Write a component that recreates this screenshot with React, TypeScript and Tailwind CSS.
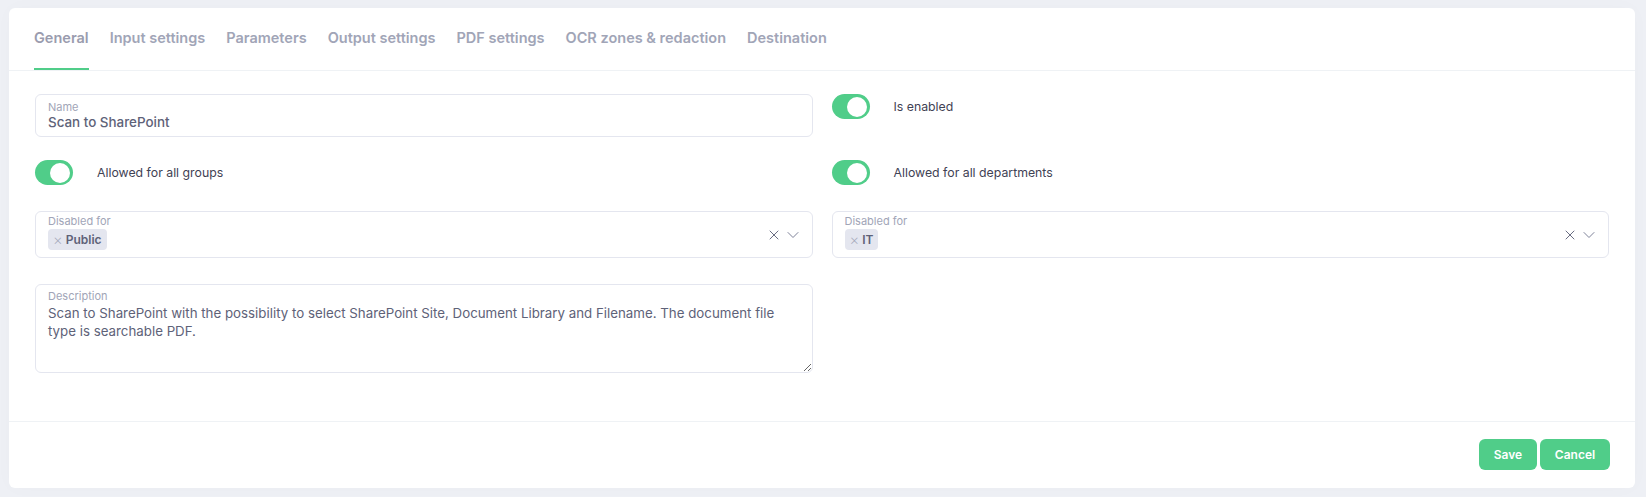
import { X, ChevronDown } from "lucide-react";

const tabs = [
  "General",
  "Input settings",
  "Parameters",
  "Output settings",
  "PDF settings",
  "OCR zones & redaction",
  "Destination",
];

function Toggle({ label }: { label: string }) {
  return (
    <div className="flex items-center">
      <div className="flex h-[25px] w-[38px] shrink-0 items-center justify-end rounded-full bg-[#50cd89] pr-[3px]">
        <div className="h-[20px] w-[20px] rounded-full bg-white" />
      </div>
      <span className="ml-[24px] text-[12.3px] leading-[18px] text-[#3f4254]">{label}</span>
    </div>
  );
}

function TagSelect({ tag }: { tag: string }) {
  return (
    <div className="flex h-[47px] items-start rounded-md border border-[#e4e6ef] bg-white pl-[12px] pr-[9px]">
      <div className="flex flex-1 flex-col pt-[3px]">
        <span className="text-[11px] leading-[13px] text-[#a1a5b7]">Disabled for</span>
        <div className="mt-[1px] flex">
          <span className="flex h-[21px] items-center gap-[3px] rounded-[4px] bg-[#e4e6ef] px-[5px] text-[12px] font-semibold text-[#5e6278]">
            <span className="text-[15px] font-extralight leading-none text-[#a1a5b7]">×</span>
            {tag}
          </span>
        </div>
      </div>
      <div className="flex h-full items-center gap-[1px]">
        <X size={16} strokeWidth={1.4} className="text-[#5e6278]" />
        <ChevronDown size={20} strokeWidth={1.2} className="text-[#7e8299]" />
      </div>
    </div>
  );
}

export default function App() {
  return (
    <div
      className="min-h-screen bg-[#eef0f5] pb-[9px] pl-[9px] pr-[11px] pt-[8px]"
      style={{ fontFamily: "Inter, 'Open Sans', sans-serif" }}
    >
      <div className="rounded-md bg-white shadow-[0_0_20px_rgba(76,87,125,0.02)]">
        {/* Tabs */}
        <div className="flex h-[63px] items-stretch gap-[21px] border-b border-[#eff2f5] px-[25px]">
          {tabs.map((t, i) => (
            <div
              key={t}
              className={
                "flex items-center border-b-2 pb-[1px] text-[14.5px] font-semibold " +
                (i === 0 ? "border-[#50cd89] text-[#9a9cae]" : "border-transparent text-[#a1a5b7]")
              }
            >
              {t}
            </div>
          ))}
        </div>

        {/* Body */}
        <div className="px-[26px] pb-[48px] pt-[23px]">
          <div className="grid grid-cols-2 items-start gap-x-[19px]">
            <div className="flex h-[43px] flex-col rounded-md border border-[#e4e6ef] px-[12px] pt-[6px]">
              <span className="text-[11px] leading-[13px] text-[#a1a5b7]">Name</span>
              <span className="text-[13.4px] font-medium leading-[17px] text-[#5e6278]">Scan to SharePoint</span>
            </div>
            <Toggle label="Is enabled" />
          </div>

          <div className="mt-[23px] grid grid-cols-2 gap-x-[19px]">
            <Toggle label="Allowed for all groups" />
            <Toggle label="Allowed for all departments" />
          </div>

          <div className="mt-[26px] grid grid-cols-2 gap-x-[19px]">
            <TagSelect tag="Public" />
            <TagSelect tag="IT" />
          </div>

          <div className="mt-[26px] grid grid-cols-2 gap-x-[19px]">
            <div className="relative">
              <span className="absolute left-[13px] top-[6px] text-[11px] leading-[13px] text-[#a1a5b7]">
                Description
              </span>
              <textarea
                className="block h-[89px] w-full resize-y rounded-md border border-[#e4e6ef] px-[12px] pt-[19px] text-[13.3px] leading-[18px] text-[#5e6278] outline-none"
                defaultValue="Scan to SharePoint with the possibility to select SharePoint Site, Document Library and Filename. The document file type is searchable PDF."
              />
            </div>
            <div />
          </div>
        </div>

        {/* Footer */}
        <div className="flex justify-end gap-[3px] border-t border-[#eff2f5] pb-[18px] pr-[25px] pt-[17px]">
          <button className="h-[31px] w-[58px] rounded-[6px] bg-[#50cd89] text-[12px] font-semibold text-white">
            Save
          </button>
          <button className="h-[31px] w-[70px] rounded-[6px] bg-[#50cd89] text-[12px] font-semibold text-white">
            Cancel
          </button>
        </div>
      </div>
    </div>
  );
}
